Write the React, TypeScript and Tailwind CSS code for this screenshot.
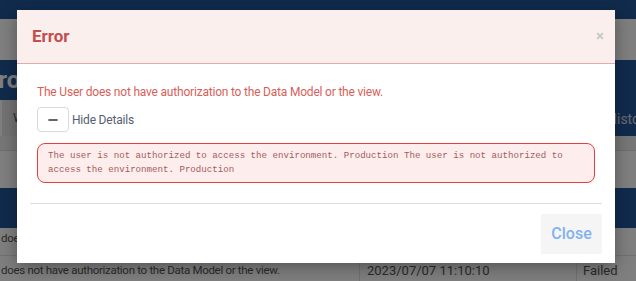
import { Minus } from 'lucide-react'

const ui = { fontFamily: 'Roboto, "Liberation Sans", sans-serif' }
const mono = { fontFamily: '"Liberation Mono", "DejaVu Sans Mono", monospace' }

const message = 'The User does not have authorization to the Data Model or the view.'
const detail =
    'The user is not authorized to access the environment. Production The user is not authorized to access the environment. Production'
const rowText = 'does not have authorization to the Data Model or the view.'

function Page() {
    return (
        <div className="flex h-full flex-col">
            <div className="h-[19px] shrink-0 bg-[#22579a]" />
            <div className="h-[41px] shrink-0 bg-white" />
            <div className="flex w-[696px] shrink-0">
                <div className="flex flex-1 flex-col">
                    <div className="flex h-[40px] items-center overflow-hidden bg-[#22579a]">
                        <span className="-ml-[24px] whitespace-nowrap text-[24px] font-bold text-white">Error List</span>
                    </div>
                    <div className="flex h-[36px] bg-white">
                        <div className="ml-[2px] flex w-[90px] items-center bg-[#e6e6e6] pl-[11px] text-[13px] text-[#555]">
                            Warnings
                        </div>
                    </div>
                </div>
                <div className="flex h-[76px] w-[100px] items-end bg-[#22579a] pb-[6px] pl-[11px] text-[14px] text-[#cfd8e2]">
                    History
                </div>
            </div>
            <div className="h-[15px] shrink-0 border-b border-[#dcdcdc] bg-[#efefef]" />
            <div className="h-[37px] shrink-0 bg-white" />
            <div className="h-[40px] shrink-0 bg-[#22579a]" />
            <div className="flex h-[28px] shrink-0 items-start border-b border-[#e2e2e2] bg-white pt-[2px] text-[11.5px] tracking-[-0.3px] text-[#555]">
                <div className="w-[359px] truncate pl-px">{rowText}</div>
            </div>
            <div className="flex h-[30px] shrink-0 items-center bg-white text-[13px] text-[#555]">
                <div className="w-[359px] whitespace-nowrap pl-px text-[11.5px] tracking-[-0.3px]">{rowText}</div>
                <div className="flex h-full w-[217px] items-center border-l border-[#e2e2e2] pl-[7px]">2023/07/07 11:10:10</div>
                <div className="flex h-full flex-1 items-center border-l border-[#e2e2e2] pl-[6px]">Failed</div>
            </div>
        </div>
    )
}

function ErrorModal() {
    return (
        <div className="absolute left-[17px] top-[10px] w-[598px] bg-white shadow-[0_4px_16px_rgba(0,0,0,0.35)]">
            <div className="flex h-[54px] items-center justify-between border-b border-[#e6aca8] bg-[#fbefee] pl-[15px] pr-[11px]">
                <h2 className="text-[17px] font-bold text-[#c0504f]">Error</h2>
                <span className="text-[15px] font-bold leading-none text-[#c8c8c8]">×</span>
            </div>
            <div className="px-[20px] pt-[20px]">
                <p className="text-[12px] leading-[16px] tracking-[-0.2px] text-[#d65f5a]">{message}</p>
                <div className="mt-[7px] flex items-center gap-[3px]">
                    <button className="flex h-[25px] w-[32px] items-center justify-center rounded-[4px] border border-[#d5dbe1] bg-white text-[#333]">
                        <Minus size={14} strokeWidth={2.5} />
                    </button>
                    <span className="text-[12px] tracking-[-0.2px] text-[#566070]">Hide Details</span>
                </div>
                <div
                    className="mt-[11px] rounded-[8px] border border-[#e53e3e] bg-[#fdeded] px-[10px] py-[5px] text-[9.15px] leading-[14px] text-[#a35b5b]"
                    style={mono}
                >
                    {detail}
                </div>
            </div>
            <div className="mx-[13px] mt-[20px] h-px bg-[#dedede]" />
            <div className="flex justify-end px-[13px] pb-[9px] pt-[10px]">
                <button className="h-[40px] w-[61px] bg-[#f5f5f5] text-[16px] font-medium text-[#82b1f0]">Close</button>
            </div>
        </div>
    )
}

export default function App() {
    return (
        <div className="relative h-[281px] w-[636px] overflow-hidden bg-white" style={ui}>
            <Page />
            <div className="absolute inset-0 bg-black/50" />
            <ErrorModal />
        </div>
    )
}
